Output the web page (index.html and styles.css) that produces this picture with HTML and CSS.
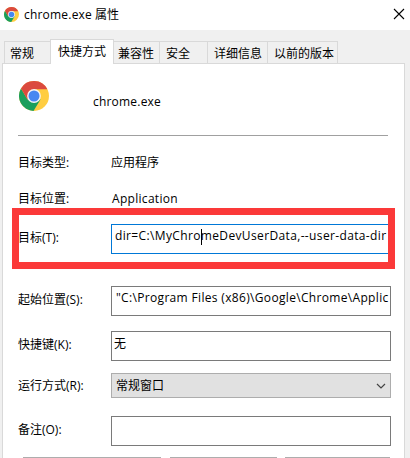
FILE: index.html
```html
<!DOCTYPE html>
<html lang="zh-CN">
<head>
<meta charset="utf-8">
<title>chrome.exe 属性</title>
<link rel="stylesheet" href="styles.css">
</head>
<body>
<svg class="defs" width="0" height="0">
  <symbol id="chrome" viewBox="0 0 30 30">
    <circle cx="15" cy="15" r="15" fill="#ffcd41"/>
    <path d="M2 7.5A15 15 0 0 0 14.5 30L21.5 18.5 15 15 8.5 18.5Z" fill="#1a9f5c"/>
    <path d="M2 7.5A15 15 0 0 1 28.4 8.3L15 8.3 8.5 18.5Z" fill="#db4a3e"/>
    <circle cx="15" cy="15" r="6.9" fill="#f4f4f4"/>
    <circle cx="15" cy="15" r="5.5" fill="#4688f1"/>
  </symbol>
</svg>
<header class="titlebar">
  <svg class="logo-small"><use href="#chrome"/></svg>
  <h1><span class="t-name">chrome.exe</span><span>属性</span></h1>
  <svg class="close" viewBox="0 0 10 10"><path d="M0 0L10 10M10 0L0 10"/></svg>
</header>
<nav class="tabs">
  <div class="tab t1">常规</div>
  <div class="tab active">快捷方式</div>
  <div class="tab t3">兼容性</div>
  <div class="tab t4">安全</div>
  <div class="tab t5">详细信息</div>
  <div class="tab t6">以前的版本</div>
</nav>
<main class="panel">
  <div class="head">
    <svg class="logo"><use href="#chrome"/></svg>
    <span class="name">chrome.exe</span>
  </div>
  <div class="row type"><label>目标类型:</label><span>应用程序</span></div>
  <div class="row place"><label>目标位置:</label><span class="app">Application</span></div>
  <div class="row target"><label>目标(T):</label><div class="field focus"><span class="dir">dir=C:\MyChro<i class="caret"></i>meDevUserData,--user-data-dir</span></div></div>
  <div class="row start"><label>起始位置(S):</label><div class="field"><span class="path">"C:\Program Files (x86)\Google\Chrome\Applic</span></div></div>
  <div class="row key"><label>快捷键(K):</label><div class="field none">无</div></div>
  <div class="row run"><label>运行方式(R):</label><div class="field select">常规窗口<svg class="chev" viewBox="0 0 10 6"><path d="M1 1L5 5L9 1"/></svg></div></div>
  <div class="row note"><label>备注(O):</label><div class="field"></div></div>
  <div class="buttons"><i class="b1"></i><i class="b2"></i><i class="b3"></i></div>
  <div class="highlight"></div>
</main>
</body>
</html>
```
FILE: styles.css
```css
* { box-sizing: border-box; }
body {
  margin: 0;
  width: 410px;
  height: 458px;
  overflow: hidden;
  background: #f0f0f0;
  color: #000;
  font: 12px/16px "Open Sans", "Noto Sans CJK SC", sans-serif;
}
.defs { position: absolute; }
.titlebar {
  display: flex;
  align-items: center;
  height: 30px;
  padding: 0 6px 2px 4px;
  background: #fff;
}
.logo-small { width: 15px; height: 15px; margin-right: 5px; }
h1 { display: flex; gap: 5px; margin: 0; padding-top: 1px; font-size: 12px; font-weight: 400; }
.t-name { width: 66px; letter-spacing: 0.2px; }
.close { width: 10px; height: 10px; margin-left: auto; overflow: visible; }
.close path { stroke: #000; stroke-width: 1.1; fill: none; }
.tabs {
  display: flex;
  align-items: flex-end;
  height: 33px;
  padding-left: 4px;
}
.tab {
  height: 22px;
  padding: 4px 0 0 5px;
  border: 1px solid #d9d9d9;
  border-width: 1px 1px 0 0;
  white-space: nowrap;
}
.t1 { width: 46px; border-left-width: 1px; border-right-width: 0; }
.active {
  z-index: 1;
  width: 64px;
  height: 25px;
  margin-bottom: -1px;
  padding: 4px 0 0 7px;
  border-left-width: 1px;
  background: #fff;
}
.t3 { width: 46px; padding-left: 4px; }
.t4 { width: 48px; padding-left: 6px; }
.t5 { width: 60px; padding-left: 6px; }
.t6 { width: 70px; padding-left: 6px; }
.panel {
  position: relative;
  width: 403px;
  height: 400px;
  margin-left: 2px;
  padding: 0 14px 0 15px;
  border: 1px solid #d9d9d9;
  background: #fff;
}
.head {
  display: flex;
  width: 370px;
  height: 72px;
  padding: 17px 0 0 1px;
  border-bottom: 1px solid #a0a0a0;
}
.logo { width: 30px; height: 30px; }
.name { margin: 13px 0 0 44px; letter-spacing: 0.2px; }
.row { display: flex; align-items: center; height: 30px; }
.row label { width: 93px; flex: none; white-space: nowrap; }
.type { margin-top: 12px; }
.place { margin-top: 6px; }
.app { margin-left: 1px; letter-spacing: 0.3px; }
.target { margin-top: 10px; }
.target label, .start label { padding-bottom: 2px; }
.key label, .note label { padding-bottom: 3px; }
.start { margin-top: 32px; }
.key { margin-top: 15px; }
.run { margin-top: 12px; height: 25px; }
.note { margin-top: 18px; }
.field {
  flex: none;
  width: 280px;
  height: 100%;
  padding: 3px 0 0 4px;
  border: 1px solid #7a7a7a;
  white-space: nowrap;
  overflow: hidden;
}
.focus { padding-left: 3px; border-color: #0078d7; }
.none { padding: 4px 0 0 2px; }
.dir { letter-spacing: 0.36px; }
.path { letter-spacing: 0.33px; }
.caret {
  display: inline-block;
  width: 1px;
  height: 16px;
  margin-right: -1px;
  background: #000;
  vertical-align: middle;
}
.select {
  display: flex;
  align-items: center;
  padding: 0 4px 0 4px;
  border-color: #adadad;
  background: #e1e1e1;
}
.chev { width: 10px; height: 6px; margin-left: auto; }
.chev path { stroke: #444; stroke-width: 1.2; fill: none; }
.buttons { display: flex; margin-top: 11px; padding-left: 5px; }
.buttons i { height: 20px; border: 1px solid #adadad; background: #e1e1e1; }
.b1 { width: 138px; }
.b2 { width: 107px; margin-left: 9px; }
.b3 { width: 105px; margin-left: 8px; }
.highlight {
  position: absolute;
  left: 9px;
  top: 144px;
  width: 383px;
  height: 61px;
  border: 7px solid #fb3939;
}
```
